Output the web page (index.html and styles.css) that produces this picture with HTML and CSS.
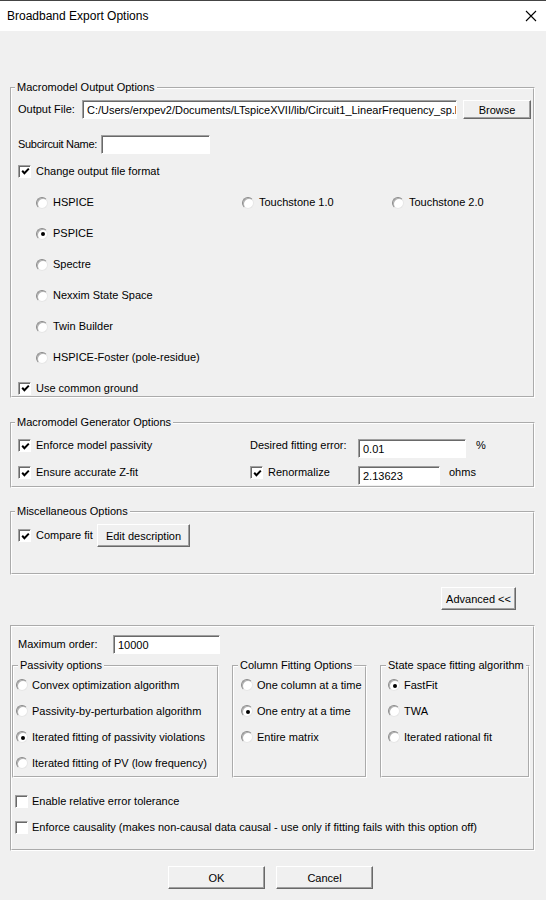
FILE: index.html
```html
<!DOCTYPE html>
<html lang="en">
    <head>
        <meta charset="utf-8">
        <title>Broadband Export Options</title>
        <link rel="stylesheet" href="styles.css">
    </head>
    <body>
        <div id="window">
            <div id="titlebar">
                <span id="title">Broadband Export Options</span>
                <svg class="close" width="12" height="12" viewBox="0 0 12 12"><path d="M1 1 L11 11 M11 1 L1 11" stroke="#000" stroke-width="1.1" fill="none"/></svg>
            </div>
            <div id="dialog">
                <fieldset class="group" id="output-group">
                    <legend>Macromodel Output Options</legend>
                    <div class="row file-row">
                        <span class="label file-label">Output File:</span>
                        <div class="field path-field">C:/Users/erxpev2/Documents/LTspiceXVII/lib/Circuit1_LinearFrequency_sp.lib</div>
                        <button class="btn browse">Browse</button>
                    </div>
                    <div class="row subckt-row">
                        <span class="label subckt-label">Subcircuit Name:</span>
                        <div class="field subckt-field"></div>
                    </div>
                    <div class="row check-row format-row">
                        <span class="check on"><svg width="9" height="9" viewBox="0 0 9 9"><path d="M1.2 3.8 L3.4 6.2 L7.8 1.6" stroke="#000" stroke-width="2" fill="none"/></svg></span>
                        Change output file format
                    </div>
                    <div id="formats">
                        <div class="opt"><span class="radio"></span>HSPICE</div>
                        <div class="opt"><span class="radio"></span>Touchstone 1.0</div>
                        <div class="opt"><span class="radio"></span>Touchstone 2.0</div>
                        <div class="opt"><span class="radio on"></span>PSPICE</div>
                        <div class="opt wide"><span class="radio"></span>Spectre</div>
                        <div class="opt wide"><span class="radio"></span>Nexxim State Space</div>
                        <div class="opt wide"><span class="radio"></span>Twin Builder</div>
                        <div class="opt wide"><span class="radio"></span>HSPICE-Foster (pole-residue)</div>
                    </div>
                    <div class="row check-row ground-row">
                        <span class="check on"><svg width="9" height="9" viewBox="0 0 9 9"><path d="M1.2 3.8 L3.4 6.2 L7.8 1.6" stroke="#000" stroke-width="2" fill="none"/></svg></span>
                        Use common ground
                    </div>
                </fieldset>

                <fieldset class="group" id="generator-group">
                    <legend>Macromodel Generator Options</legend>
                    <div class="gen-row first">
                        <div class="cell check-row"><span class="check on"><svg width="9" height="9" viewBox="0 0 9 9"><path d="M1.2 3.8 L3.4 6.2 L7.8 1.6" stroke="#000" stroke-width="2" fill="none"/></svg></span>Enforce model passivity</div>
                        <div class="cell">Desired fitting error:</div>
                        <div class="field num-field err-field">0.01</div>
                        <span class="unit pct">%</span>
                    </div>
                    <div class="gen-row second">
                        <div class="cell check-row"><span class="check on"><svg width="9" height="9" viewBox="0 0 9 9"><path d="M1.2 3.8 L3.4 6.2 L7.8 1.6" stroke="#000" stroke-width="2" fill="none"/></svg></span>Ensure accurate Z-fit</div>
                        <div class="cell check-row renorm"><span class="check on"><svg width="9" height="9" viewBox="0 0 9 9"><path d="M1.2 3.8 L3.4 6.2 L7.8 1.6" stroke="#000" stroke-width="2" fill="none"/></svg></span>Renormalize</div>
                        <div class="field num-field ohm-field">2.13623</div>
                        <span class="unit ohms">ohms</span>
                    </div>
                </fieldset>

                <fieldset class="group" id="misc-group">
                    <legend>Miscellaneous Options</legend>
                    <div class="row check-row compare-row">
                        <span class="check on"><svg width="9" height="9" viewBox="0 0 9 9"><path d="M1.2 3.8 L3.4 6.2 L7.8 1.6" stroke="#000" stroke-width="2" fill="none"/></svg></span>
                        <span class="compare-label">Compare fit</span>
                        <button class="btn edit">Edit description</button>
                    </div>
                </fieldset>

                <div class="advanced-row">
                    <button class="btn advanced">Advanced &lt;&lt;</button>
                </div>

                <fieldset class="group" id="advanced-group">
                    <div class="row order-row">
                        <span class="label order-label">Maximum order:</span>
                        <div class="field order-field">10000</div>
                    </div>
                    <div id="subgroups">
                        <fieldset class="sub passivity">
                            <legend>Passivity options</legend>
                            <div class="opt"><span class="radio"></span>Convex optimization algorithm</div>
                            <div class="opt"><span class="radio"></span>Passivity-by-perturbation algorithm</div>
                            <div class="opt"><span class="radio on"></span>Iterated fitting of passivity violations</div>
                            <div class="opt"><span class="radio"></span>Iterated fitting of PV (low frequency)</div>
                        </fieldset>
                        <fieldset class="sub columns">
                            <legend>Column Fitting Options</legend>
                            <div class="opt"><span class="radio"></span>One column at a time</div>
                            <div class="opt"><span class="radio on"></span>One entry at a time</div>
                            <div class="opt"><span class="radio"></span>Entire matrix</div>
                        </fieldset>
                        <fieldset class="sub statespace">
                            <legend>State space fitting algorithm</legend>
                            <div class="opt"><span class="radio on"></span>FastFit</div>
                            <div class="opt"><span class="radio"></span>TWA</div>
                            <div class="opt"><span class="radio"></span>Iterated rational fit</div>
                        </fieldset>
                    </div>
                    <div class="row check-row tol-row"><span class="check"></span>Enable relative error tolerance</div>
                    <div class="row check-row causal-row"><span class="check"></span>Enforce causality (makes non-causal data causal - use only if fitting fails with this option off)</div>
                </fieldset>

                <div class="footer">
                    <button class="btn ok">OK</button>
                    <button class="btn cancel">Cancel</button>
                </div>
            </div>
        </div>
    </body>
</html>
```

FILE: styles.css
```css
body {
    margin: 0;
    font-family: "Liberation Sans", Arial, sans-serif;
    font-size: 11px;
    line-height: 13px;
    color: #000;
    background: #f0f0f0;
    white-space: nowrap;
}

#window {
    width: 546px;
    height: 900px;
    overflow: hidden;
    background: #f0f0f0;
}

#titlebar {
    height: 30px;
    border-top: 1px solid #444;
    background: #fff;
    display: flex;
    align-items: center;
    justify-content: space-between;
    padding: 0 9px 0 7px;
}

#title {
    font-size: 12px;
    color: #000;
}

#dialog {
    padding: 50px 11px 0 10px;
}

/* group boxes */

.group, .sub {
    margin: 0;
    border: 2px groove #fff;
    padding: 0 2px 0 6px;
    min-width: 0;
}

.group legend {
    padding: 0 2px;
    margin-left: -3px;
    line-height: 13px;
}

.row {
    display: flex;
    align-items: center;
}

.check-row {
    display: flex;
    align-items: center;
}

.label {
    flex: none;
}

/* inputs and buttons */

.field {
    box-sizing: border-box;
    flex: none;
    height: 19px;
    background: #fff;
    border: 1px solid;
    border-color: #a0a0a0 #fff #fff #a0a0a0;
    box-shadow: inset 1px 1px 0 #696969;
    padding: 3px 0 0 4px;
    overflow: hidden;
}

.btn {
    box-sizing: border-box;
    flex: none;
    height: 23px;
    margin: 0;
    padding: 0;
    font-family: inherit;
    font-size: 11px;
    color: #000;
    background: #f0f0f0;
    border: 1px solid;
    border-color: #fff #696969 #696969 #fff;
    box-shadow: inset -1px -1px 0 #a0a0a0;
}

.check {
    box-sizing: border-box;
    flex: none;
    width: 13px;
    height: 13px;
    margin-right: 5px;
    background: #fff;
    border: 1px solid;
    border-color: #a0a0a0 #fff #fff #a0a0a0;
    box-shadow: inset 1px 1px 0 #696969;
    display: flex;
    align-items: center;
    justify-content: center;
    padding: 1px 0 0 1px;
}

.radio {
    box-sizing: border-box;
    flex: none;
    width: 12px;
    height: 12px;
    margin-right: 5px;
    border-radius: 50%;
    background: #fff;
    border: 1px solid;
    border-color: #8a8a8a #e6e6e6 #e6e6e6 #8a8a8a;
    box-shadow: inset 1px 1px 0 #b0b0b0;
    display: flex;
    align-items: center;
    justify-content: center;
}

.radio.on::after {
    content: "";
    width: 4px;
    height: 4px;
    border-radius: 50%;
    background: #000;
    margin: 1px 0 0 1px;
}

.opt {
    display: flex;
    align-items: center;
}

/* output group */

#output-group {
    padding-top: 6px;
}

.file-row {
    height: 19px;
}

.file-label {
    width: 64px;
}

.path-field {
    width: 375px;
}

.browse {
    width: 68px;
    height: 19px;
    margin-left: 6px;
}

.subckt-row {
    height: 19px;
    margin-top: 16px;
}

.subckt-label {
    width: 83px;
    letter-spacing: -0.3px;
}

.subckt-field {
    width: 109px;
}

.format-row {
    height: 20px;
    margin-top: 7px;
}

#formats {
    display: grid;
    grid-template-columns: 206px 150px auto;
    grid-auto-rows: 31px;
    margin-top: 6px;
    padding-left: 18px;
}

#formats .wide {
    grid-column: 1 / 4;
}

#formats .opt:nth-child(4) {
    grid-column: 1 / 4;
}

.ground-row {
    height: 16px;
    margin-top: 7px;
}

/* generator group */

#generator-group {
    margin-top: 18px;
    padding-bottom: 6px;
}

.gen-row {
    display: grid;
    grid-template-columns: 232px 108px auto 1fr;
    align-items: center;
    height: 20px;
}

.gen-row.first {
    margin-top: 4px;
}

.gen-row.second {
    margin-top: 7px;
}

.num-field {
    margin-top: 6px;
    padding-left: 4px;
}

.err-field {
    width: 108px;
}

.ohm-field {
    width: 82px;
}

.pct {
    margin-left: 10px;
}

.ohms {
    margin-left: 9px;
}

/* misc group */

#misc-group {
    margin-top: 17px;
    padding-top: 6px;
    padding-bottom: 26px;
}

.compare-row {
    height: 23px;
}

.compare-label {
    width: 61px;
}

.edit {
    width: 93px;
}

.advanced-row {
    display: flex;
    justify-content: flex-end;
    margin-top: 12px;
    padding-right: 19px;
}

.advanced {
    width: 75px;
}

/* advanced group */

#advanced-group {
    margin-top: 15px;
    padding: 8px 3px 14px 0;
}

.order-row {
    height: 19px;
    padding-left: 6px;
}

.order-label {
    width: 95px;
}

.order-field {
    width: 107px;
}

#subgroups {
    display: grid;
    grid-template-columns: 207px 135px 150px;
    column-gap: 13px;
    margin-top: 5px;
}

.sub {
    padding: 0 0 0 2px;
}

.sub legend {
    padding: 0 2px;
    margin-left: 2px;
    line-height: 13px;
}

.sub .opt {
    height: 26px;
}

.sub .radio {
    margin-right: 4px;
}

.sub.columns {
    padding-left: 7px;
}

.sub.columns legend {
    margin-left: -3px;
}

.sub.statespace {
    padding-left: 6px;
}

.sub.statespace legend {
    margin-left: -2px;
}

.tol-row {
    height: 16px;
    margin-top: 15px;
    padding-left: 3px;
}

.causal-row {
    height: 16px;
    margin-top: 10px;
    padding-left: 3px;
}

.tol-row .check, .causal-row .check {
    margin-right: 4px;
}

.footer {
    display: flex;
    justify-content: center;
    gap: 11px;
    margin-top: 15px;
    padding-right: 4px;
}

.ok, .cancel {
    width: 97px;
}
```
